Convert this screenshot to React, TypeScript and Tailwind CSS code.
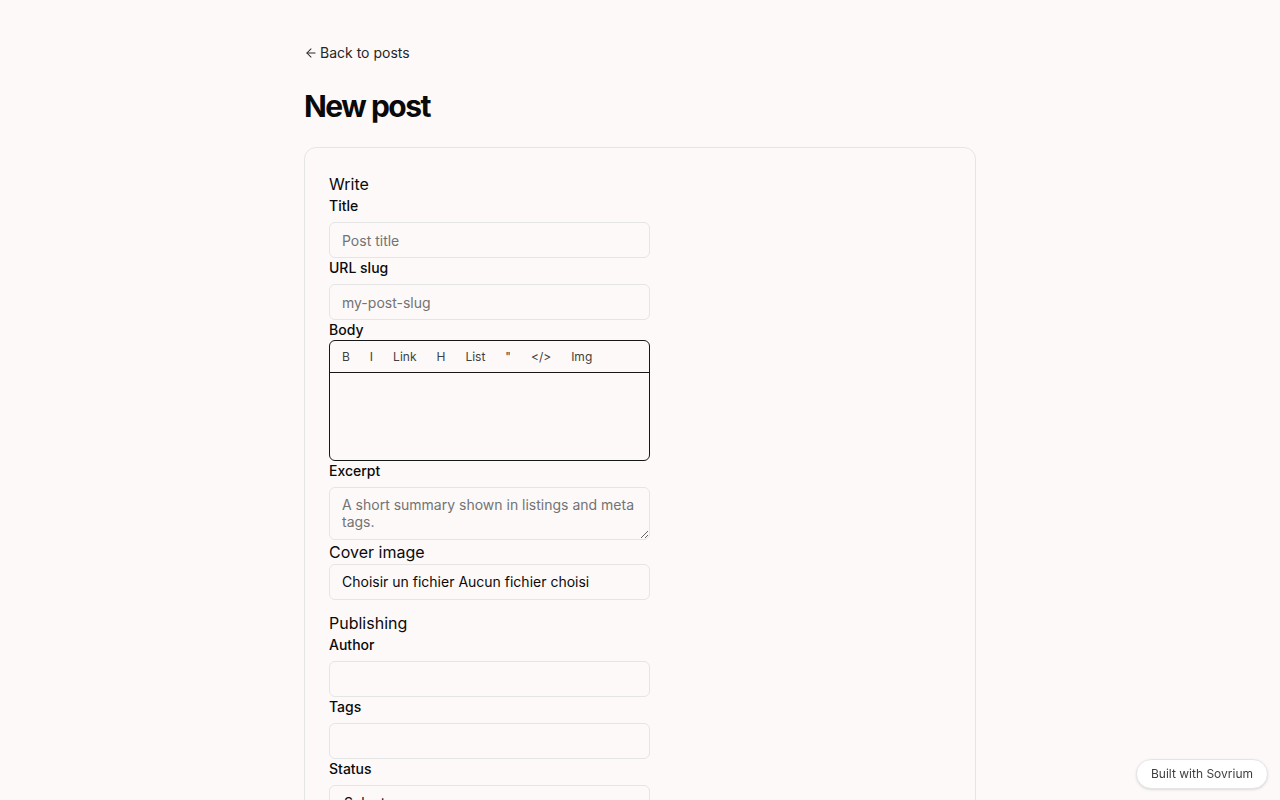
import { ArrowLeft, ChevronDown } from "lucide-react";

const tools = ["B", "I", "Link", "H", "List", '"', "</>", "Img"];

function Field({ label, children }: { label: string; children: React.ReactNode }) {
	return (
		<div>
			<label className="block text-sm font-medium text-neutral-950">{label}</label>
			<div className="mt-1.5">{children}</div>
		</div>
	);
}

function TextInput({ placeholder }: { placeholder?: string }) {
	return (
		<input
			type="text"
			placeholder={placeholder}
			className="block h-9 w-[321px] rounded-md border border-neutral-200 bg-transparent px-3 text-sm text-neutral-950 outline-none placeholder:text-neutral-500"
		/>
	);
}

export default function App() {
	return (
		<div
			className="min-h-screen bg-[#fdf9f9] text-neutral-950"
			style={{ fontFamily: "Inter, 'Noto Sans', sans-serif" }}
		>
			<div className="mx-auto max-w-2xl pt-[42px]">
				<a href="#" className="mb-[25px] inline-flex items-center gap-0.5 text-sm text-neutral-800">
					<ArrowLeft className="h-3.5 w-3.5" strokeWidth={1.75} />
					Back to posts
				</a>
				<h1 className="mb-[23px] text-3xl font-bold tracking-tighter">New post</h1>

				<div className="rounded-xl border border-neutral-200 p-6 pb-40">
					<h2 className="text-base">Write</h2>
					<Field label="Title">
						<TextInput placeholder="Post title" />
					</Field>
					<Field label="URL slug">
						<TextInput placeholder="my-post-slug" />
					</Field>

					<label className="block text-sm font-medium">Body</label>
					<div className="w-[321px] rounded-md border border-neutral-900">
						<div className="flex h-8 items-center gap-1 border-b border-neutral-900 px-1">
							{tools.map((t) => (
								<button key={t} type="button" className="px-2 py-1 text-xs text-neutral-700">
									{t}
								</button>
							))}
						</div>
						<div className="h-[87px]" />
					</div>

					<Field label="Excerpt">
						<textarea
							placeholder="A short summary shown in listings and meta tags."
							className="block h-[53px] w-[321px] rounded-md border border-neutral-200 bg-transparent px-3 py-2 text-sm leading-[17px] outline-none placeholder:text-neutral-500"
						/>
					</Field>

					<label className="block text-base">Cover image</label>
					<div className="flex h-9 w-[321px] items-center rounded-md border border-neutral-200 px-3 text-sm">
						Choisir un fichier Aucun fichier choisi
					</div>

					<h2 className="mt-[11px] text-base">Publishing</h2>
					<Field label="Author">
						<TextInput />
					</Field>
					<Field label="Tags">
						<TextInput />
					</Field>
					<label className="block text-sm font-medium">Status</label>
					<div className="mt-1.5 flex h-9 w-[321px] items-center justify-between rounded-md border border-neutral-200 px-3 text-sm">
						<span className="pl-0.5">Select...</span>
						<ChevronDown className="h-3.5 w-3.5 text-neutral-500" />
					</div>
				</div>
			</div>

			<div className="fixed bottom-[11px] right-3 rounded-full border border-neutral-200 bg-white px-3.5 py-1.5 text-xs text-neutral-700 shadow-sm">
				Built with Sovrium
			</div>
		</div>
	);
}
